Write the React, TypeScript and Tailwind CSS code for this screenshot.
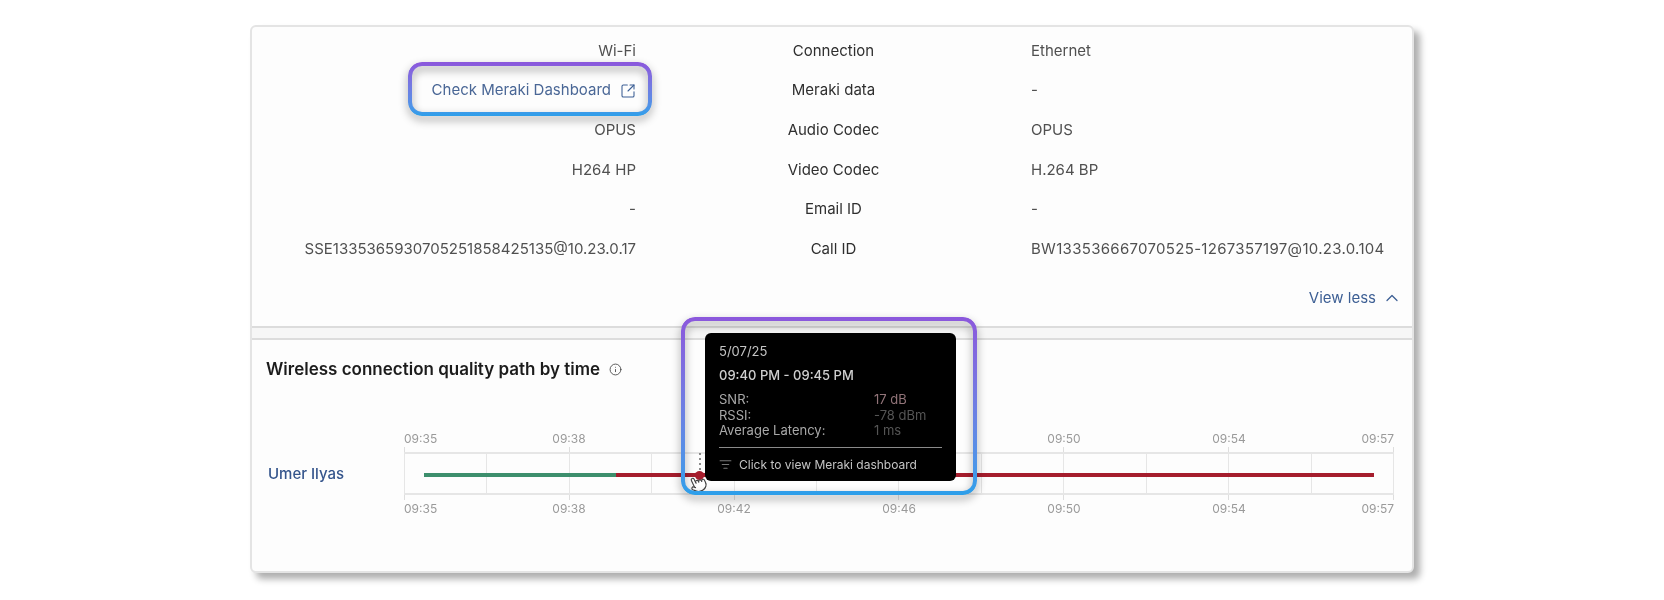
import { ChevronUp, Info, ListFilter, Pointer, SquareArrowOutUpRight } from "lucide-react";

const rows = [
  { left: "Wi-Fi", label: "Connection", right: "Ethernet" },
  { left: "link", label: "Meraki data", right: "-" },
  { left: "OPUS", label: "Audio Codec", right: "OPUS" },
  { left: "H264 HP", label: "Video Codec", right: "H.264 BP" },
  { left: "-", label: "Email ID", right: "-" },
  {
    left: "SSE1335365930705251858425135@10.23.0.17",
    label: "Call ID",
    right: "BW133536667070525-1267357197@10.23.0.104",
  },
];

const times = ["09:35", "09:38", "09:42", "09:46", "09:50", "09:54", "09:57"];

function TimeLabels() {
  return (
    <div className="flex justify-between text-[12px] leading-[16px] text-[#9a9a9a]">
      {times.map((t, i) => (
        <div
          key={i}
          className={`flex w-0 ${i === 0 ? "justify-start" : i === 6 ? "justify-end" : "justify-center"}`}
        >
          <span>{t}</span>
        </div>
      ))}
    </div>
  );
}

function Ticks() {
  return (
    <div className="flex h-[5px] justify-between">
      {times.map((t, i) => (
        <div key={i} className="h-full w-px bg-[#dedede]" />
      ))}
    </div>
  );
}

function Highlight({ className }: { className: string }) {
  return (
    <div className={`pointer-events-none absolute drop-shadow-[0_4px_4px_rgba(0,0,0,0.4)] ${className}`}>
      <div className="h-full w-full rounded-[14px] bg-gradient-to-b from-[#8b57dc] to-[#2b9fea] p-[4px] [mask:linear-gradient(#000_0_0)_content-box_exclude,linear-gradient(#000_0_0)]" />
    </div>
  );
}

export default function App() {
  return (
    <div className="h-[600px] bg-white pt-[25px] font-['Inter',sans-serif]">
      <div className="relative mx-auto h-[548px] w-[1164px] rounded-[6px] border-2 border-[#e4e4e4] bg-[#fdfdfd] shadow-[6px_6px_7px_rgba(0,0,0,0.32)]">
        <div className="blur-[0.6px]">
          {/* Details table */}
          <div className="pt-[4px] text-[15px] text-[#505050]">
            {rows.map((r) => (
              <div key={r.label} className="grid h-[39.7px] grid-cols-[384px_395px_1fr] items-center">
                {r.left === "link" ? (
                  <div className="flex items-center justify-end gap-[9px] text-[#4a6796]">
                    <span>Check Meraki Dashboard</span>
                    <SquareArrowOutUpRight size={16} strokeWidth={1.6} className="text-[#3c5f95]" />
                  </div>
                ) : (
                  <div className="text-right">{r.left}</div>
                )}
                <div className="text-center text-[#2f2f2f]">{r.label}</div>
                <div className={r.label === "Call ID" ? "tracking-[0.3px]" : ""}>{r.right}</div>
              </div>
            ))}
          </div>
          <div className="mt-[18.8px] flex h-5 items-center justify-end gap-[6px] pr-[10px] text-[15px] text-[#3d5f94]">
            <span>View less</span>
            <ChevronUp size={20} strokeWidth={1.5} />
          </div>
          <div className="mt-[18px] h-[14px] border-y-2 border-[#dcdcdc] bg-[#f6f6f6]" />

          {/* Wireless quality chart */}
          <div className="px-[14px]">
            <div className="mt-[20px] flex h-5 items-center gap-[9px]">
              <h2 className="text-[17px] font-semibold text-[#1c1c1c]">Wireless connection quality path by time</h2>
              <Info size={13} strokeWidth={1.6} className="text-[#444]" />
            </div>
            <div className="mt-[51px] flex items-center">
              <div className="ml-[2px] w-[136px] text-[15px] font-medium text-[#35558c]">Umer Ilyas</div>
              <div className="w-[990px]">
                <TimeLabels />
                <Ticks />
                <div className="relative grid h-[43px] grid-cols-12 border-y-2 border-l border-[#e6e6e6]">
                  {Array.from({ length: 12 }).map((_, i) => (
                    <div key={i} className="border-r border-[#e6e6e6]" />
                  ))}
                  <div className="absolute left-[19px] top-[19px] flex h-[4px] w-[950px]">
                    <div className="w-[192px] bg-[#3d8f6d]" />
                    <div className="flex-1 bg-[#a51d2d]" />
                  </div>
                  <div className="absolute left-[294px] top-[-1px] flex flex-col gap-[3px]">
                    {[0, 1, 2, 3].map((d) => (
                      <div key={d} className="h-[2px] w-[2px] rounded-full bg-[#666]" />
                    ))}
                  </div>
                  <div className="absolute left-[290px] top-[17px] h-[9px] w-[9px] rounded-full bg-[#a51d2d]" />
                </div>
                <Ticks />
                <div className="pt-px">
                  <TimeLabels />
                </div>
              </div>
            </div>
          </div>
        </div>

        {/* Hover tooltip */}
        <div className="absolute left-[453px] top-[306px] flex h-[148px] w-[251px] flex-col rounded-[6px] bg-black px-[14px] pt-[10px] text-[13px] text-[#c4c4c4] blur-[0.5px]">
          <div className="h-4 leading-4">5/07/25</div>
          <div className="mt-2 h-4 font-medium leading-4 text-[#cfcfcf]">09:40 PM - 09:45 PM</div>
          <div className="mt-[9px] grid grid-cols-[155px_1fr] leading-[15.5px] text-[#a8a8a8]">
            <span>SNR:</span>
            <span className="text-[#927479]">17 dB</span>
            <span>RSSI:</span>
            <span className="text-[#555]">-78 dBm</span>
            <span>Average Latency:</span>
            <span className="text-[#555]">1 ms</span>
          </div>
          <div className="mt-[8px] h-px bg-[#8a8a8a]" />
          <div className="mt-[8px] flex items-center gap-[7px] text-[12px] text-[#c4c4c4]">
            <ListFilter size={13} className="text-[#777]" />
            <span>Click to view Meraki dashboard</span>
          </div>
        </div>

        <Pointer
          size={18}
          strokeWidth={1.5}
          className="absolute left-[437px] top-[448px] -rotate-[25deg] fill-white text-[#444]"
        />

        <Highlight className="left-[156px] top-[35px] h-[54px] w-[244px]" />
        <Highlight className="left-[429px] top-[290px] h-[178px] w-[296px]" />
      </div>
    </div>
  );
}
